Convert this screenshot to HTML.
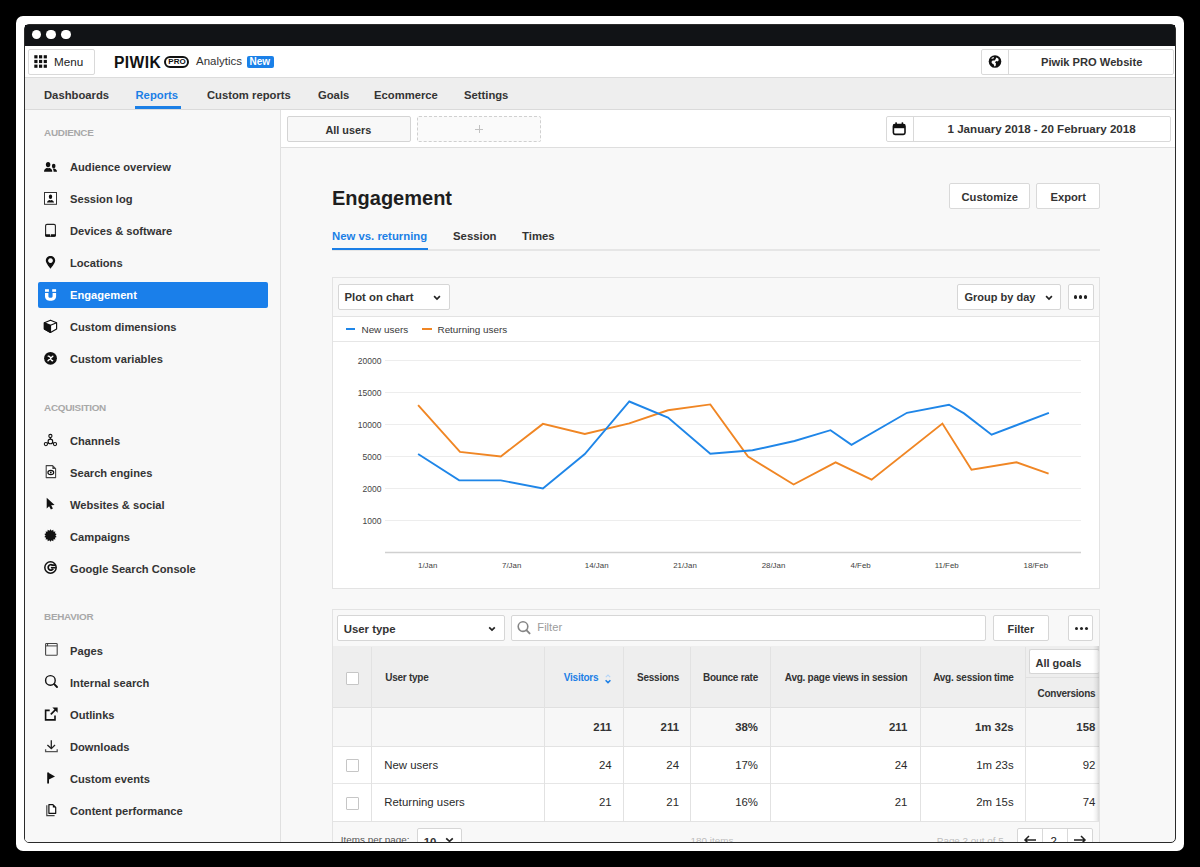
<!DOCTYPE html>
<html><head><meta charset="utf-8">
<style>
*{box-sizing:border-box;margin:0;padding:0}
html,body{width:1200px;height:867px;background:#000;overflow:hidden;font-family:"Liberation Sans",sans-serif;color:#222}
.a{position:absolute;white-space:nowrap}
#frame{left:16px;top:16px;width:1168px;height:835px;background:#fff;border-radius:7px}
#win{left:24px;top:24px;width:1152px;height:819px;border:1px solid #2b2b2b;border-radius:5px;background:#f8f8f8}
#L{position:absolute;left:25px;top:25px;width:1150px;height:817px;overflow:hidden;border-radius:0 0 4px 4px}
#P{position:absolute;left:-25px;top:-25px;width:1200px;height:867px}
.btn{position:absolute;background:#fff;border:1px solid #d9d9d9;border-radius:2px}
.nv{position:absolute;top:88.8px;font-size:11.25px;line-height:12px;font-weight:700;color:#343434;white-space:nowrap}
.sec{position:absolute;left:44px;font-size:9.9px;line-height:10px;font-weight:700;letter-spacing:-0.25px;color:#a8a8a8;white-space:nowrap}
.it{position:absolute;left:70px;font-size:11.15px;line-height:12px;font-weight:700;color:#343434;white-space:nowrap}
</style></head><body>
<div id="frame" class="a"></div>
<div id="win" class="a"></div>
<div id="L"><div id="P">
  <!-- titlebar -->
  <div class="a" style="left:25px;top:25px;width:1150px;height:20.5px;background:#111316"></div>
  <div class="a" style="left:31.8px;top:30.1px;width:9.4px;height:9.4px;border-radius:50%;background:#fff"></div>
  <div class="a" style="left:46.3px;top:30.1px;width:9.4px;height:9.4px;border-radius:50%;background:#fff"></div>
  <div class="a" style="left:61.3px;top:30.1px;width:9.4px;height:9.4px;border-radius:50%;background:#fff"></div>
  <!-- header -->
  <div class="a" style="left:25px;top:45.5px;width:1150px;height:32px;background:#fff;border-bottom:1px solid #dcdcdc"></div>
  <div class="btn" style="left:28px;top:49px;width:67px;height:26px"></div>
  <svg class="a" style="left:34px;top:55px" width="14" height="14" viewBox="0 0 14 14"><g fill="#111">
    <rect x="0.3" y="0.2" width="3.2" height="3.2"/><rect x="5" y="0.2" width="3.2" height="3.2"/><rect x="9.7" y="0.2" width="3.2" height="3.2"/>
    <rect x="0.3" y="4.9" width="3.2" height="3.2"/><rect x="5" y="4.9" width="3.2" height="3.2"/><rect x="9.7" y="4.9" width="3.2" height="3.2"/>
    <rect x="0.3" y="9.6" width="3.2" height="3.2"/><rect x="5" y="9.6" width="3.2" height="3.2"/><rect x="9.7" y="9.6" width="3.2" height="3.2"/></g></svg>
  <div class="a" style="left:54px;top:56px;font-size:11.7px;line-height:12px;color:#222">Menu</div>
  <div class="a" style="left:114px;top:54.8px;font-size:15.6px;line-height:15.6px;font-weight:700;color:#111;letter-spacing:0.4px">PIWIK</div>
  <div class="a" style="left:163.8px;top:55.8px;width:24.8px;height:11.8px;border:2.1px solid #111;border-radius:6px"></div>
  <div class="a" style="left:168.3px;top:57.5px;font-size:8px;line-height:8px;font-weight:700;color:#111">PRO</div>
  <div class="a" style="left:196px;top:55px;font-size:11.5px;line-height:12px;color:#333">Analytics</div>
  <div class="a" style="left:246.5px;top:55.8px;width:27px;height:12px;background:#1a80e8;border-radius:2px"></div>
  <div class="a" style="left:249.5px;top:57px;font-size:10px;line-height:10px;font-weight:700;color:#fff">New</div>
  <div class="btn" style="left:981px;top:49px;width:193px;height:26px"></div>
  <div class="a" style="left:1008px;top:50px;width:1px;height:24px;background:#d9d9d9"></div>
  <div class="a" style="left:1041px;top:56px;font-size:11.15px;line-height:12px;font-weight:700;color:#333">Piwik PRO Website</div>
  <!-- nav -->
  <div class="a" style="left:25px;top:77.5px;width:1150px;height:32px;background:#eeeeee;border-bottom:1px solid #dadada"></div>
  <div class="nv" style="left:44px">Dashboards</div>
  <div class="nv" style="left:135.5px;color:#1b7fe6">Reports</div>
  <div class="a" style="left:135px;top:106px;width:46px;height:3px;background:#1b7fe6"></div>
  <div class="nv" style="left:207px">Custom reports</div>
  <div class="nv" style="left:318px">Goals</div>
  <div class="nv" style="left:374px">Ecommerce</div>
  <div class="nv" style="left:464px">Settings</div>
  <!-- sidebar -->
  <div class="a" style="left:25px;top:109.5px;width:256px;height:740px;background:#f8f8f8;border-right:1px solid #e0e0e0"></div>
  <div class="sec" style="top:128.3px">AUDIENCE</div>
  <div class="a" style="left:38px;top:282px;width:230px;height:26px;background:#1a7fea;border-radius:2px"></div>
  <div class="it" style="top:160.8px">Audience overview</div>
  <div class="it" style="top:192.8px">Session log</div>
  <div class="it" style="top:224.8px">Devices &amp; software</div>
  <div class="it" style="top:256.8px">Locations</div>
  <div class="it" style="top:288.8px;color:#fff">Engagement</div>
  <div class="it" style="top:320.8px">Custom dimensions</div>
  <div class="it" style="top:352.8px">Custom variables</div>
  <div class="sec" style="top:403.3px">ACQUISITION</div>
  <div class="it" style="top:434.5px">Channels</div>
  <div class="it" style="top:466.5px">Search engines</div>
  <div class="it" style="top:498.5px">Websites &amp; social</div>
  <div class="it" style="top:530.5px">Campaigns</div>
  <div class="it" style="top:562.5px">Google Search Console</div>
  <div class="sec" style="top:612.4px">BEHAVIOR</div>
  <div class="it" style="top:644.6px">Pages</div>
  <div class="it" style="top:676.6px">Internal search</div>
  <div class="it" style="top:708.6px">Outlinks</div>
  <div class="it" style="top:740.6px">Downloads</div>
  <div class="it" style="top:772.6px">Custom events</div>
  <div class="it" style="top:804.6px">Content performance</div>
  <!-- segment bar -->
  <div class="a" style="left:281px;top:109.5px;width:894px;height:38px;background:#fff;border-bottom:1px solid #dedede"></div>
  <div class="btn" style="left:286.5px;top:116px;width:124px;height:25.5px;background:#f8f8f8;border-color:#d4d4d4"></div>
  <div class="a" style="left:325.5px;top:123.6px;font-size:10.85px;line-height:12px;font-weight:700;color:#333">All users</div>
  <div class="a" style="left:417px;top:116px;width:124px;height:25.5px;border:1px dashed #d0d0d0;border-radius:2px;background:#fafafa"></div>
  <div class="a" style="left:475px;top:125px;width:8.4px;height:8.4px">
    <div class="a" style="left:0;top:3.6px;width:8.4px;height:1.3px;background:#c2c2c2"></div>
    <div class="a" style="left:3.55px;top:0;width:1.3px;height:8.4px;background:#c2c2c2"></div></div>
  <div class="btn" style="left:886px;top:116px;width:285px;height:25.5px"></div>
  <div class="a" style="left:912.5px;top:117px;width:1px;height:23.5px;background:#d9d9d9"></div>
  <div class="a" style="left:947.5px;top:123px;font-size:11.6px;line-height:12px;font-weight:700;color:#333">1 January 2018 - 20 February 2018</div>

  <!-- title area -->
  <div class="a" style="left:332px;top:188px;font-size:20px;line-height:20px;font-weight:700;color:#1e1e1e">Engagement</div>
  <div class="btn" style="left:949px;top:183px;width:80.5px;height:26px"></div>
  <div class="a" style="left:961.5px;top:190.6px;font-size:11.2px;line-height:12px;font-weight:700;color:#333">Customize</div>
  <div class="btn" style="left:1036px;top:183px;width:64px;height:26px"></div>
  <div class="a" style="left:1050.5px;top:190.6px;font-size:11.2px;line-height:12px;font-weight:700;color:#333">Export</div>
  <div class="a" style="left:332px;top:230px;font-size:11.35px;line-height:12px;font-weight:700;color:#1b7fe6">New vs. returning</div>
  <div class="a" style="left:453px;top:230px;font-size:11.35px;line-height:12px;font-weight:700;color:#333">Session</div>
  <div class="a" style="left:522px;top:230px;font-size:11.35px;line-height:12px;font-weight:700;color:#333">Times</div>
  <div class="a" style="left:332px;top:249.2px;width:768px;height:1.6px;background:#e6e6e6"></div>
  <div class="a" style="left:332px;top:247.8px;width:95.5px;height:2.7px;background:#1b7fe6"></div>
  <!-- chart panel -->
  <div class="a" style="left:332px;top:276.5px;width:768px;height:312px;background:#fff;border:1px solid #e3e3e3"></div>
  <div class="a" style="left:333px;top:277.5px;width:766px;height:39.5px;background:#f8f8f8;border-bottom:1px solid #e3e3e3"></div>
  <div class="a" style="left:333px;top:341px;width:766px;height:1px;background:#e6e6e6"></div>
  <div class="btn" style="left:337.5px;top:284px;width:112px;height:25.5px;border-color:#d6d6d6"></div>
  <div class="a" style="left:344.5px;top:291.3px;font-size:11.3px;line-height:12px;font-weight:700;color:#333">Plot on chart</div>
  <svg class="a" style="left:433px;top:294.5px" width="8" height="6" viewBox="0 0 8 6"><path d="M1.1 1.2 L4 4 L6.9 1.2" fill="none" stroke="#222" stroke-width="1.7"/></svg>
  <div class="btn" style="left:957px;top:284px;width:104px;height:25.5px;border-color:#d6d6d6"></div>
  <div class="a" style="left:964.5px;top:291.3px;font-size:11px;line-height:12px;font-weight:700;color:#333">Group by day</div>
  <svg class="a" style="left:1045px;top:294.5px" width="8" height="6" viewBox="0 0 8 6"><path d="M1.1 1.2 L4 4 L6.9 1.2" fill="none" stroke="#222" stroke-width="1.7"/></svg>
  <div class="btn" style="left:1068px;top:284px;width:25.5px;height:25.5px;border-color:#d6d6d6"></div>
  <div class="a" style="left:1074px;top:295.4px;width:3.2px;height:3.2px;border-radius:50%;background:#222;box-shadow:5px 0 0 #222,10px 0 0 #222"></div>
  <div class="a" style="left:345.5px;top:328.4px;width:9.8px;height:1.7px;background:#1f86e8"></div>
  <div class="a" style="left:361.5px;top:324.5px;font-size:9.9px;line-height:10px;color:#383838">New users</div>
  <div class="a" style="left:421.8px;top:328.4px;width:9.8px;height:1.7px;background:#f08624"></div>
  <div class="a" style="left:437.5px;top:324.5px;font-size:9.9px;line-height:10px;color:#383838">Returning users</div>
  <svg class="a" style="left:0;top:0" width="1200" height="867" viewBox="0 0 1200 867" font-family="Liberation Sans">
<line x1="385" y1="360.5" x2="1081" y2="360.5" stroke="#ededed" stroke-width="1"/>
<text x="381.5" y="363.5" text-anchor="end" font-size="8.5" fill="#444">20000</text>
<line x1="385" y1="392.5" x2="1081" y2="392.5" stroke="#ededed" stroke-width="1"/>
<text x="381.5" y="395.5" text-anchor="end" font-size="8.5" fill="#444">15000</text>
<line x1="385" y1="424.5" x2="1081" y2="424.5" stroke="#ededed" stroke-width="1"/>
<text x="381.5" y="427.5" text-anchor="end" font-size="8.5" fill="#444">10000</text>
<line x1="385" y1="456.5" x2="1081" y2="456.5" stroke="#ededed" stroke-width="1"/>
<text x="381.5" y="459.5" text-anchor="end" font-size="8.5" fill="#444">5000</text>
<line x1="385" y1="488.5" x2="1081" y2="488.5" stroke="#ededed" stroke-width="1"/>
<text x="381.5" y="491.5" text-anchor="end" font-size="8.5" fill="#444">2000</text>
<line x1="385" y1="520.5" x2="1081" y2="520.5" stroke="#ededed" stroke-width="1"/>
<text x="381.5" y="523.5" text-anchor="end" font-size="8.5" fill="#444">1000</text>
<line x1="385" y1="552.5" x2="1081" y2="552.5" stroke="#d0d0d0" stroke-width="1.3"/>
<text x="427.7" y="567.7" text-anchor="middle" font-size="7.9" fill="#3e3e3e">1/Jan</text>
<text x="511.7" y="567.7" text-anchor="middle" font-size="7.9" fill="#3e3e3e">7/Jan</text>
<text x="596.7" y="567.7" text-anchor="middle" font-size="7.9" fill="#3e3e3e">14/Jan</text>
<text x="685" y="567.7" text-anchor="middle" font-size="7.9" fill="#3e3e3e">21/Jan</text>
<text x="773.5" y="567.7" text-anchor="middle" font-size="7.9" fill="#3e3e3e">28/Jan</text>
<text x="860.6" y="567.7" text-anchor="middle" font-size="7.9" fill="#3e3e3e">4/Feb</text>
<text x="946.7" y="567.7" text-anchor="middle" font-size="7.9" fill="#3e3e3e">11/Feb</text>
<text x="1035.8" y="567.7" text-anchor="middle" font-size="7.9" fill="#3e3e3e">18/Feb</text>
<polyline points="418.1,405.2 460,451.9 500.8,456.4 542.9,423.9 584.8,434 629.3,423.3 668,410.3 710.3,404.4 748,456.6 793.6,484.5 835.6,462.3 871.6,479.7 942.4,423.6 971.5,469.8 1016.5,462.3 1048.6,473.7" fill="none" stroke="#f08624" stroke-width="1.9" stroke-linejoin="miter"/>
<polyline points="418.1,454 459.2,480.4 500.8,480.4 542.9,488.4 584.8,454 629.3,401.5 668,417.5 710.3,453.7 752.5,450.3 794.5,441 830.5,430.2 851.5,444.9 907,412.8 949,404.7 964,413.4 991.6,434.7 1048.9,412.8" fill="none" stroke="#1f86e8" stroke-width="1.9" stroke-linejoin="miter"/>
  </svg>
  <!-- table panel -->
  <div class="a" style="left:332px;top:608.5px;width:768px;height:260px;background:#f8f8f8;border:1px solid #e3e3e3"></div>

  <div class="btn" style="left:337px;top:615.2px;width:167.5px;height:25.4px;border-color:#d6d6d6"></div>
  <div class="a" style="left:343.7px;top:623px;font-size:11.4px;line-height:12px;font-weight:700;color:#333">User type</div>
  <svg class="a" style="left:488px;top:626px" width="8" height="6" viewBox="0 0 8 6"><path d="M1.2 1.3 L4 4.1 L6.8 1.3" fill="none" stroke="#222" stroke-width="1.7"/></svg>
  <div class="btn" style="left:511px;top:615px;width:475px;height:25.5px;border-color:#d6d6d6"></div>
  <svg class="a" style="left:516px;top:620px" width="16" height="16" viewBox="0 0 16 16"><circle cx="7" cy="6.6" r="4.8" fill="none" stroke="#858585" stroke-width="1.6"/><path d="M10.4 10.2 L13.6 13.4" stroke="#858585" stroke-width="1.9" stroke-linecap="round"/></svg>
  <div class="a" style="left:537.3px;top:620.7px;font-size:11.2px;line-height:12px;color:#9c9c9c">Filter</div>
  <div class="btn" style="left:992.8px;top:615.2px;width:55.8px;height:25.4px;border-color:#d6d6d6"></div>
  <div class="a" style="left:1007.5px;top:623px;font-size:10.9px;line-height:12px;font-weight:700;color:#333">Filter</div>
  <div class="btn" style="left:1068px;top:615.2px;width:25.2px;height:25.4px;border-color:#d6d6d6"></div>
  <div class="a" style="left:1074.5px;top:626.5px;width:3px;height:3px;border-radius:50%;background:#222;box-shadow:5px 0 0 #222,10px 0 0 #222"></div>
  <!-- table -->
  <div class="a" style="left:333px;top:645.8px;width:766px;height:62.7px;background:#eeeeee;border-bottom:1px solid #e0e0e0"></div>
  <div class="a" style="left:333px;top:708.5px;width:766px;height:38px;background:#f7f7f7;border-bottom:1px solid #e3e3e3"></div>
  <div class="a" style="left:333px;top:746.5px;width:766px;height:37.5px;background:#fff;border-bottom:1px solid #e6e6e6"></div>
  <div class="a" style="left:333px;top:784px;width:766px;height:37.5px;background:#fff;border-bottom:1px solid #e3e3e3"></div>
  <div class="a" style="left:371.0px;top:646.5px;width:1px;height:175px;background:#e2e2e2"></div>
  <div class="a" style="left:543.8px;top:646.5px;width:1px;height:175px;background:#e2e2e2"></div>
  <div class="a" style="left:622.8px;top:646.5px;width:1px;height:175px;background:#e2e2e2"></div>
  <div class="a" style="left:690.2px;top:646.5px;width:1px;height:175px;background:#e2e2e2"></div>
  <div class="a" style="left:769.5px;top:646.5px;width:1px;height:175px;background:#e2e2e2"></div>
  <div class="a" style="left:919.9px;top:646.5px;width:1px;height:175px;background:#e2e2e2"></div>
  <div class="a" style="left:1025.1px;top:646.5px;width:1px;height:175px;background:#e2e2e2"></div>
  <div class="a" style="left:1092.5px;top:645.8px;width:6.5px;height:175.7px;z-index:2;background:linear-gradient(to right,rgba(0,0,0,0),rgba(0,0,0,0.06) 60%,rgba(0,0,0,0.14))"></div>
  <div class="a" style="left:345.8px;top:672px;width:13px;height:13px;background:#fff;border:1px solid #c6c6c6;border-radius:1px"></div>
  <div class="a" style="left:345.8px;top:759px;width:13px;height:13px;background:#fff;border:1px solid #c6c6c6;border-radius:1px"></div>
  <div class="a" style="left:345.8px;top:796.7px;width:13px;height:13px;background:#fff;border:1px solid #c6c6c6;border-radius:1px"></div>
  <div class="a" style="left:385.2px;top:673.3px;font-size:10px;line-height:10px;letter-spacing:-0.25px;font-weight:700;color:#333">User type</div>
  <div class="a" style="right:601.7px;top:673.3px;font-size:10px;line-height:10px;letter-spacing:-0.25px;font-weight:700;color:#333;color:#1b7fe6">Visitors</div>
  <svg class="a" style="left:603.5px;top:673px" width="8" height="12" viewBox="0 0 8 12"><path d="M1.8 4.2 L4 2 L6.2 4.2" fill="none" stroke="#b5d5f7" stroke-width="1.2"/><path d="M1.6 7.2 L4 9.6 L6.4 7.2" fill="none" stroke="#1b7fe6" stroke-width="1.5"/></svg>
  <div class="a" style="right:521px;top:673.3px;font-size:10px;line-height:10px;letter-spacing:-0.25px;font-weight:700;color:#333">Sessions</div>
  <div class="a" style="right:442px;top:673.3px;font-size:10px;line-height:10px;letter-spacing:-0.25px;font-weight:700;color:#333">Bounce rate</div>
  <div class="a" style="right:292.6px;top:673.3px;font-size:10px;line-height:10px;letter-spacing:-0.25px;font-weight:700;color:#333">Avg. page views in session</div>
  <div class="a" style="right:186.39999999999998px;top:673.3px;font-size:10px;line-height:10px;letter-spacing:-0.25px;font-weight:700;color:#333">Avg. session time</div>
  <div class="a" style="left:1028.7px;top:648.6px;width:70.3px;height:25.8px;background:#fff;border:1px solid #d6d6d6;border-right:none;border-radius:2px"></div>
  <div class="a" style="left:1035.5px;top:657px;font-size:11px;line-height:12px;font-weight:700;color:#333">All goals</div>
  <div class="a" style="left:1026px;top:676.5px;width:73px;height:1px;background:#e0e0e0"></div>
  <div class="a" style="right:104.70000000000005px;top:689.2px;font-size:10px;line-height:10px;letter-spacing:-0.25px;font-weight:700;color:#333">Conversions</div>
  <div class="a" style="right:588.3px;top:721.2px;font-size:11.4px;line-height:12px;font-weight:700;color:#333">211</div>
  <div class="a" style="right:521px;top:721.2px;font-size:11.4px;line-height:12px;font-weight:700;color:#333">211</div>
  <div class="a" style="right:442px;top:721.2px;font-size:11.4px;line-height:12px;font-weight:700;color:#333">38%</div>
  <div class="a" style="right:292.6px;top:721.2px;font-size:11.4px;line-height:12px;font-weight:700;color:#333">211</div>
  <div class="a" style="right:186.39999999999998px;top:721.2px;font-size:11.4px;line-height:12px;font-weight:700;color:#333">1m 32s</div>
  <div class="a" style="right:104.70000000000005px;top:721.2px;font-size:11.4px;line-height:12px;font-weight:700;color:#333">158</div>
  <div class="a" style="left:384.3px;top:758.9px;font-size:11.4px;line-height:12px;font-weight:400;color:#2a2a2a">New users</div>
  <div class="a" style="right:588.3px;top:758.9px;font-size:11.4px;line-height:12px;font-weight:400;color:#2a2a2a">24</div>
  <div class="a" style="right:521px;top:758.9px;font-size:11.4px;line-height:12px;font-weight:400;color:#2a2a2a">24</div>
  <div class="a" style="right:442px;top:758.9px;font-size:11.4px;line-height:12px;font-weight:400;color:#2a2a2a">17%</div>
  <div class="a" style="right:292.6px;top:758.9px;font-size:11.4px;line-height:12px;font-weight:400;color:#2a2a2a">24</div>
  <div class="a" style="right:186.39999999999998px;top:758.9px;font-size:11.4px;line-height:12px;font-weight:400;color:#2a2a2a">1m 23s</div>
  <div class="a" style="right:104.70000000000005px;top:758.9px;font-size:11.4px;line-height:12px;font-weight:400;color:#2a2a2a">92</div>
  <div class="a" style="left:384.3px;top:796.4px;font-size:11.4px;line-height:12px;font-weight:400;color:#2a2a2a">Returning users</div>
  <div class="a" style="right:588.3px;top:796.4px;font-size:11.4px;line-height:12px;font-weight:400;color:#2a2a2a">21</div>
  <div class="a" style="right:521px;top:796.4px;font-size:11.4px;line-height:12px;font-weight:400;color:#2a2a2a">21</div>
  <div class="a" style="right:442px;top:796.4px;font-size:11.4px;line-height:12px;font-weight:400;color:#2a2a2a">16%</div>
  <div class="a" style="right:292.6px;top:796.4px;font-size:11.4px;line-height:12px;font-weight:400;color:#2a2a2a">21</div>
  <div class="a" style="right:186.39999999999998px;top:796.4px;font-size:11.4px;line-height:12px;font-weight:400;color:#2a2a2a">2m 15s</div>
  <div class="a" style="right:104.70000000000005px;top:796.4px;font-size:11.4px;line-height:12px;font-weight:400;color:#2a2a2a">74</div>
  <div class="a" style="left:340.8px;top:835px;font-size:9.9px;line-height:10px;color:#555">Items per page:</div>
  <div class="btn" style="left:417.3px;top:828.3px;width:45px;height:25px;border-color:#d6d6d6"></div>
  <div class="a" style="left:423.7px;top:835.5px;font-size:11.4px;line-height:12px;font-weight:700;color:#333">10</div>
  <svg class="a" style="left:445px;top:837px" width="9" height="6" viewBox="0 0 9 6"><path d="M1.2 1.3 L4.5 4.3 L7.8 1.3" fill="none" stroke="#222" stroke-width="1.7"/></svg>
  <div class="a" style="left:690.5px;top:835.5px;font-size:9.9px;line-height:10px;color:#bdbdbd">180 items</div>
  <div class="a" style="left:936.8px;top:835.5px;font-size:9.9px;line-height:10px;color:#bdbdbd">Page 2 out of 5</div>
  <div class="btn" style="left:1017px;top:827.8px;width:76px;height:25px;border-color:#d6d6d6"></div>
  <div class="a" style="left:1041.8px;top:829px;width:1px;height:24px;background:#d9d9d9"></div>
  <div class="a" style="left:1066.8px;top:829px;width:1px;height:24px;background:#d9d9d9"></div>
  <div class="a" style="left:1050.5px;top:834.5px;font-size:11.4px;line-height:12px;color:#222">2</div>
  <svg class="a" style="left:1022.5px;top:835px" width="14" height="10" viewBox="0 0 14 10"><path d="M13 5 H2 M6 1 L2 5 L6 9" fill="none" stroke="#222" stroke-width="1.5"/></svg>
  <svg class="a" style="left:1073px;top:835px" width="14" height="10" viewBox="0 0 14 10"><path d="M1 5 H12 M8 1 L12 5 L8 9" fill="none" stroke="#222" stroke-width="1.5"/></svg>
  <!-- CONTENT -->
</div></div>
<svg id="icons" class="a" style="left:0;top:0" width="1200" height="867" viewBox="0 0 1200 867">

<!-- globe -->
<circle cx="995" cy="61.5" r="6.3" fill="#111"/>
<path d="M991.2 58.3 C992.3 57.3 993.6 57.1 994.2 57.6 L993.4 58.6 L992 58.8 Z M996.2 57.6 L998.2 58.4 L998.8 60.2 L997.4 61.6 L996.2 61 L995 62.2 L996 63.4 L995.6 66 L994.4 66.6 L993.8 64.6 L992.2 63.6 L991.4 62 L992.6 60.4 L994.6 60.4 L995.6 59.2 Z" fill="#fff"/>
<!-- calendar -->
<rect x="893.4" y="124.6" width="11.6" height="9.8" rx="1.6" fill="none" stroke="#111" stroke-width="1.6"/>
<rect x="893.4" y="124.6" width="11.6" height="3.6" fill="#111"/>
<rect x="895.3" y="122.2" width="1.6" height="3" rx="0.6" fill="#111"/>
<rect x="901.6" y="122.2" width="1.6" height="3" rx="0.6" fill="#111"/>
<!-- audience overview -->
<g fill="#111">
<ellipse cx="48.1" cy="164.6" rx="2.2" ry="2.7"/>
<path d="M44 171.8 C44 169.2 45.8 168.4 47.2 167.8 L48.1 168.6 L49 167.8 C50.6 168.4 52.3 169.2 52.3 171.8 Z"/>
<ellipse cx="53.7" cy="166" rx="1.8" ry="2.3"/>
<path d="M53.2 168.4 L54.4 168.4 C55.8 169 57 169.8 57 171.8 L53.6 171.8 C53.6 170.4 53.4 169.4 52.6 168.8 Z"/>
</g>
<!-- session log -->
<rect x="44.5" y="192.5" width="12" height="11.8" fill="#fff" stroke="#333" stroke-width="1"/>
<g fill="#111"><ellipse cx="50.5" cy="196.8" rx="1.7" ry="2.2"/>
<path d="M46.9 202.5 C47.3 200.9 48.6 200.3 49.6 199.9 L50.5 200.5 L51.4 199.9 C52.4 200.3 53.7 200.9 54.1 202.5 Z"/></g>
<!-- devices -->
<rect x="45.6" y="224.4" width="9.8" height="11.8" rx="1.4" fill="none" stroke="#222" stroke-width="1.1"/>
<path d="M45.1 234.2 H50.1 V236.8 H46.4 Q45.1 236.8 45.1 235.4 Z M50.9 234.2 H55.9 V235.4 Q55.9 236.8 54.6 236.8 H50.9 Z" fill="#111"/>
<!-- location pin -->
<path d="M50.5 255.9 C47.9 255.9 45.8 257.9 45.8 260.5 C45.8 263.4 50.5 268.7 50.5 268.7 C50.5 268.7 55.2 263.4 55.2 260.5 C55.2 257.9 53.1 255.9 50.5 255.9 Z M50.5 258.2 A2.4 2.4 0 1 1 50.49 258.2 Z" fill="#111" fill-rule="evenodd"/>
<!-- magnet -->
<g fill="#fff">
<rect x="45" y="289.2" width="3.9" height="2.6"/>
<rect x="52.2" y="289.2" width="3.9" height="2.6"/>
<path d="M45 293.1 H48.4 V296.2 C48.4 297.4 49.3 297.7 50.5 297.7 C51.7 297.7 52.6 297.4 52.6 296.2 V293.1 H56.1 V296.2 C56.1 299.2 53.6 300.8 50.5 300.8 C47.4 300.8 45 299.2 45 296.2 Z"/>
</g>
<!-- cube -->
<path d="M50.5 320.2 L56.6 322.7 V329 L50.5 332.5 L44.4 329 V322.7 Z" fill="#fff" stroke="#111" stroke-width="1.2" stroke-linejoin="round"/>
<path d="M44.4 322.7 L50.5 325.2 V332.5 L44.4 329 Z" fill="#111" stroke="#111" stroke-width="1.2" stroke-linejoin="round"/>
<path d="M50.5 325.2 L56.6 322.7" stroke="#111" stroke-width="1.2"/>
<!-- custom variables -->
<circle cx="50.5" cy="358.3" r="6.4" fill="#111"/>
<path d="M48.3 356.2 Q49.6 355.8 50.3 357.6 L51.3 360 Q51.8 361 52.6 360.6 M52.8 356.2 L48 360.8" fill="none" stroke="#fff" stroke-width="1.4" stroke-linecap="round"/>
<!-- channels -->
<g fill="none" stroke="#111" stroke-width="1.1">
<circle cx="50.4" cy="436" r="1.6"/>
<circle cx="50.4" cy="441.4" r="2.3"/>
<circle cx="45.9" cy="444.1" r="1.6"/>
<circle cx="55" cy="444.1" r="1.6"/>
<path d="M50.4 437.6 V439.1 M48.4 442.6 L47.3 443.3 M52.4 442.6 L53.6 443.3"/>
</g>
<!-- search engines -->
<path d="M46.2 465.6 H52.6 L55.6 468.7 V477.6 H46.2 Z" fill="#fff" stroke="#444" stroke-width="1.1" stroke-linejoin="round"/>
<path d="M52.4 465.6 V469 H55.6 Z" fill="#444"/>
<ellipse cx="50.8" cy="472.5" rx="2.9" ry="2.2" fill="none" stroke="#111" stroke-width="1.2"/>
<circle cx="50.8" cy="472.5" r="0.9" fill="#111"/>
<!-- cursor -->
<path d="M46.7 497.8 L54.6 504.9 L51.2 505.2 L52.9 508.5 L50.9 509.4 L49.1 506.2 L46.7 508.4 Z" fill="#111"/>
<!-- campaigns -->
<polygon points="50.50,529.20 51.59,530.72 53.23,529.82 53.56,531.67 55.43,531.57 54.91,533.37 56.64,534.10 55.40,535.50 56.64,536.90 54.91,537.63 55.43,539.43 53.56,539.33 53.23,541.18 51.59,540.28 50.50,541.80 49.41,540.28 47.77,541.18 47.44,539.33 45.57,539.43 46.09,537.63 44.36,536.90 45.60,535.50 44.36,534.10 46.09,533.37 45.57,531.57 47.44,531.67 47.77,529.82 49.41,530.72" fill="#111"/>
<!-- google -->
<circle cx="50.5" cy="567.5" r="5.7" fill="none" stroke="#111" stroke-width="1.5"/>
<path d="M55.4 565.2 H52.4 A2.7 2.7 0 1 0 53.2 568.8" fill="none" stroke="#111" stroke-width="1.7"/><path d="M50.9 567.7 H55.8" fill="none" stroke="#111" stroke-width="1.6"/>
<!-- pages -->
<rect x="45.6" y="643.5" width="11.6" height="11.8" rx="0.8" fill="none" stroke="#444" stroke-width="1.1"/>
<path d="M45.6 645.9 H57.2" stroke="#555" stroke-width="1.1"/>
<path d="M47.6 643.6 V645.9" stroke="#333" stroke-width="1"/>
<!-- internal search -->
<circle cx="50.4" cy="680.4" r="4.8" fill="none" stroke="#111" stroke-width="1.4"/>
<path d="M54.2 684.2 L57 687" stroke="#111" stroke-width="1.9" stroke-linecap="round"/>
<!-- outlinks -->
<path d="M49.7 710.4 H45.6 V719.9 H55 V715.5" fill="none" stroke="#111" stroke-width="1.6"/>
<path d="M50.8 714.4 L56.6 708.6" stroke="#111" stroke-width="1.6"/>
<path d="M52.4 707.6 H57.6 V712.8 Z" fill="#111"/>
<!-- downloads -->
<path d="M51.3 740.2 V748 M47.4 745 L51.3 748.6 L55 745" fill="none" stroke="#222" stroke-width="1.3"/>
<path d="M45.6 749.2 V751.6 H57.2 V749.2" fill="none" stroke="#555" stroke-width="1.3"/>
<!-- flag -->
<path d="M48.1 772.4 V783.6" stroke="#111" stroke-width="1.8"/>
<path d="M48.9 772.9 L55 776.4 L48.9 779.4 Z" fill="#111"/>
<!-- content performance -->
<path d="M48.9 804.6 H52.9 L55.7 807.4 V813.3 H48.9 Z" fill="#fff" stroke="#111" stroke-width="1.2" stroke-linejoin="round"/>
<path d="M52.8 804.6 V807.5 H55.7 Z" fill="#111"/>
<path d="M46.8 805.2 V815.6 H54.6" fill="none" stroke="#444" stroke-width="1.2"/>
</svg>
</body></html>
